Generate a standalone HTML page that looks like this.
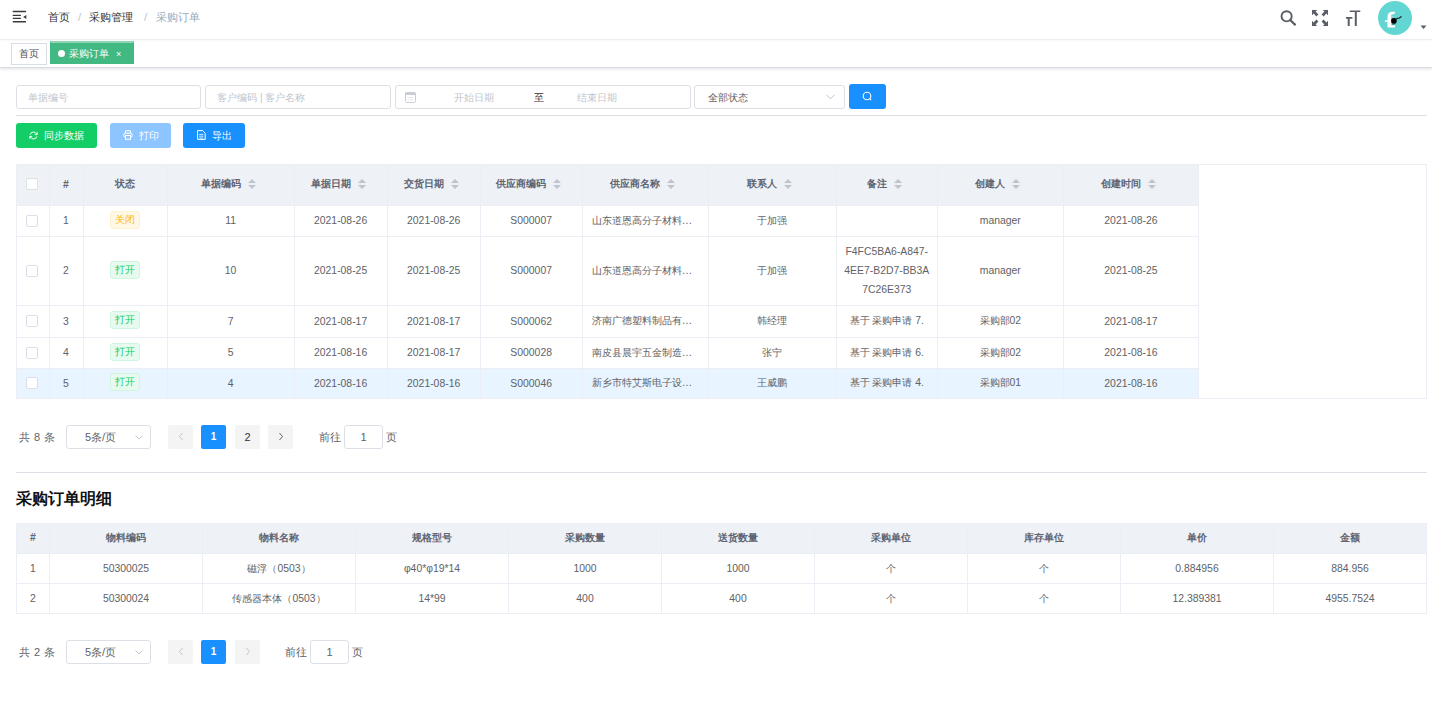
<!DOCTYPE html>
<html><head><meta charset="utf-8">
<style>
*{box-sizing:border-box;margin:0;padding:0}
html,body{width:1432px;height:705px;overflow:hidden;background:#fff;font-family:"Liberation Sans",sans-serif;color:#606266}
.abs{position:absolute}
.hdr{position:absolute;left:0;top:0;width:1432px;height:40px;border-bottom:1px solid #f0f2f5;box-shadow:0 1px 2px rgba(0,21,41,.03)}
.bc{position:absolute;top:10px;font-size:11.2px;line-height:14px;white-space:nowrap}
.tags{position:absolute;left:0;top:40px;width:1432px;height:28px;border-bottom:1px solid #d8dce5;box-shadow:0 1px 3px 0 rgba(0,0,0,.12)}
.tag{position:absolute;top:43px;height:22px;border:1px solid #d8dce5;font-size:10px;line-height:20px;color:#495060;padding:0 7px;background:#fff}
.inp{position:absolute;top:85px;height:24px;border:1px solid #dcdfe6;border-radius:3px;font-size:10.4px;line-height:23px;color:#c0c4cc;padding-left:11px;background:#fff;white-space:nowrap}
.btn{position:absolute;top:123px;height:25px;border-radius:3px;font-size:10px;line-height:26px;color:#fff;text-align:center;white-space:nowrap}
table{border-collapse:collapse;table-layout:fixed}
.t td,.t th{border-right:1px solid #ebeef5;border-bottom:1px solid #ebeef5;text-align:center;font-size:10.4px;color:#606266;padding:0;overflow:hidden;white-space:nowrap}
.t th{background:#eef1f6;color:#5f6573;font-weight:bold}
.tagc{display:inline-block;height:18px;line-height:16px;padding:0 4px;border-radius:3px;font-size:10px;border:1px solid;vertical-align:middle;position:relative;top:-1px}
.tg{background:#e7faf0;border-color:#d0f5e0;color:#13ce66}
.to{background:#fff8e6;border-color:#fff1cc;color:#ffba00}
.cb{display:inline-block;width:12px;height:12px;border:1px solid #dcdfe6;border-radius:2px;background:#fff;vertical-align:middle}
.sort{display:inline-block;vertical-align:middle;width:20px;height:11px;position:relative}
.sort:before{content:"";position:absolute;left:7px;top:0;border:4px solid transparent;border-bottom:4px solid #c0c4cc;border-top-width:0}
.sort:after{content:"";position:absolute;left:7px;top:6px;border:4px solid transparent;border-top:4px solid #c0c4cc;border-bottom-width:0}
.el{overflow:hidden;text-overflow:ellipsis;white-space:nowrap;padding:0 9px;text-align:left}
.pg{position:absolute;font-size:11px;white-space:nowrap;word-spacing:1px}
.dt th{padding-bottom:2px}
.pbtn{position:absolute;height:24px;width:25px;background:#f4f4f5;border-radius:2px;text-align:center;line-height:24px;font-size:10px;color:#606266;font-weight:bold}
.psel{position:absolute;height:24px;border:1px solid #dcdfe6;border-radius:3px;font-size:11px;line-height:22px;color:#606266;background:#fff}
</style></head><body>
<!-- header -->
<div class="hdr"></div>
<svg class="abs" style="left:8px;top:6px" width="24" height="22" viewBox="0 0 24 22"><g fill="#3a3a3a"><rect x="4.6" y="4.8" width="13.6" height="1.4" rx="0.7"/><rect x="4.6" y="8.8" width="8.4" height="1.3" rx="0.6"/><rect x="4.6" y="11.8" width="8.4" height="1.3" rx="0.6"/><rect x="4.6" y="15.1" width="13.6" height="1.4" rx="0.7"/><path d="M18.3 9.1V13.1L15.2 11.1Z"/></g></svg>
<div class="bc" style="left:48px;color:#303133">首页</div>
<div class="bc" style="left:78px;color:#c0c4cc">/</div>
<div class="bc" style="left:89px;color:#303133">采购管理</div>
<div class="bc" style="left:144px;color:#c0c4cc">/</div>
<div class="bc" style="left:156px;color:#97a8be">采购订单</div>

<!-- right icons -->
<svg class="abs" style="left:1279px;top:8px" width="20" height="20" viewBox="0 0 20 20"><circle cx="7.6" cy="8.3" r="5.1" fill="none" stroke="#5a5e66" stroke-width="1.9"/><path d="M11.4 12.3 L16 16.6" stroke="#5a5e66" stroke-width="2.2" stroke-linecap="round"/></svg>
<svg class="abs" style="left:1311px;top:9px" width="18" height="18" viewBox="0 0 18 18" fill="#5a5e66"><path d="M1 1h5.2L4.6 2.6 7.4 5.4 5.4 7.4 2.6 4.6 1 6.2z"/><path d="M17 1v5.2l-1.6-1.6-2.8 2.8-2-2 2.8-2.8L11.8 1z"/><path d="M1 17v-5.2l1.6 1.6 2.8-2.8 2 2-2.8 2.8L6.2 17z"/><path d="M17 17h-5.2l1.6-1.6-2.8-2.8 2-2 2.8 2.8 1.6-1.6z"/></svg>
<svg class="abs" style="left:1345px;top:9px" width="18" height="18" viewBox="0 0 18 18" fill="#5a5e66"><path d="M4.7 1.4h10.6v1.7h-3.5V17H9.8V3.1H4.7z"/><path d="M1 8h6.4v1.7H4.7V17H2.7V9.7H1z"/></svg>
<svg class="abs" style="left:1378px;top:1px" width="34" height="34" viewBox="0 0 34 34"><circle cx="17" cy="17" r="17" fill="#62d6d3"/><path d="M9.5 26.5V15.5C9.5 12.5 11.5 10.8 14.7 10.8H17.3L16.2 13.2H14.6C13.6 13.2 13.2 14 13.2 15V24.3H17V26.5Z" fill="#fff"/><rect x="6.8" y="19.4" width="4.6" height="1.6" fill="#fff"/><path d="M13 15.8h3.5" stroke="#c9c9c9" stroke-width="0.9"/><circle cx="15.9" cy="19.9" r="2.8" fill="#000"/><path d="M17.4 18.6L19.5 17.3 21.5 17 23.5 15.3" stroke="#111" stroke-width="1.1" fill="none"/><path d="M14.3 23.4h2.2" stroke="#555" stroke-width="0.8"/></svg>
<svg class="abs" style="left:1420px;top:25px" width="8" height="5" viewBox="0 0 8 5"><path d="M0.5 0.5h6l-3 3.5z" fill="#5a5e66"/></svg>
<!-- tags -->
<div class="tags"></div>
<div class="tag" style="left:11px;width:36px;color:#495060">首页</div>
<div class="tag" style="left:50px;width:84px;background:#42b983;border-color:#42b983;color:#fff;top:41px;height:23px;line-height:21px;padding-left:7px;border-top:2px solid #8fd4b4"><span style="display:inline-block;width:7px;height:7px;border-radius:50%;background:#fff;margin-right:4px;vertical-align:0px"></span>采购订单<span style="margin-left:7px;font-size:9px">×</span></div>
<!-- search -->
<div class="inp" style="left:16px;width:185px">单据编号</div>
<div class="inp" style="left:205px;width:186px">客户编码 | 客户名称</div>
<div class="inp" style="left:395px;width:296px;padding-left:0">
 <svg class="abs" style="left:9px;top:6px" width="11" height="11" viewBox="0 0 11 11"><rect x="0.5" y="0.5" width="10" height="10" rx="1.2" fill="none" stroke="#c8ccd4"/><rect x="0.5" y="0.5" width="10" height="2.5" fill="#c8ccd4"/><path d="M2.5 5.5h6M2.5 7.8h6" stroke="#dcdfe6" stroke-width="0.8"/></svg>
 <span class="abs" style="left:58px">开始日期</span><span class="abs" style="left:138px;color:#303133">至</span><span class="abs" style="left:181px">结束日期</span>
</div>
<div class="inp" style="left:694px;width:151px;color:#606266;padding-left:13px">全部状态<svg class="abs" style="left:131px;top:8px" width="9" height="6" viewBox="0 0 9 6"><path d="M0.5 0.8 L4.5 4.8 L8.5 0.8" fill="none" stroke="#c0c4cc" stroke-width="1"/></svg></div>
<div class="abs" style="left:849px;top:84px;width:37px;height:25px;border-radius:3px;background:#1890ff"></div>
<svg class="abs" style="left:862px;top:91px" width="11" height="11" viewBox="0 0 11 11"><circle cx="5" cy="5" r="3.8" fill="none" stroke="#fff" stroke-width="1.1"/><path d="M7.6 7.6L9.2 9.2" stroke="#fff" stroke-width="1.2"/></svg>
<div class="abs" style="left:16px;top:115px;width:1411px;height:1px;background:#dcdfe6"></div>
<!-- buttons -->
<div class="btn" style="left:16px;width:81px;background:#13ce66"><svg style="vertical-align:-1px;margin-right:6px" width="9" height="9" viewBox="0 0 9 9"><path d="M1.2 3.6A3.4 3.4 0 0 1 7.6 3" fill="none" stroke="#fff" stroke-width="1"/><path d="M7.8 5.4A3.4 3.4 0 0 1 1.4 6" fill="none" stroke="#fff" stroke-width="1"/><path d="M8.2 1.2V3.6H5.8" fill="none" stroke="#fff" stroke-width="1"/><path d="M0.8 7.8V5.4H3.2" fill="none" stroke="#fff" stroke-width="1"/></svg>同步数据</div>
<div class="btn" style="left:110px;width:61px;background:#8cc5ff"><svg style="vertical-align:-1px;margin-right:6px" width="10" height="10" viewBox="0 0 10 10"><path d="M2.5 3.2V0.8H7.5V3.2" fill="none" stroke="#fff" stroke-width="1"/><rect x="0.7" y="3.2" width="8.6" height="4" rx="1.8" fill="none" stroke="#fff" stroke-width="1"/><rect x="2.5" y="5.5" width="5" height="3.8" fill="#8cc5ff" stroke="#fff" stroke-width="1"/></svg>打印</div>
<div class="btn" style="left:183px;width:62px;background:#1890ff"><svg style="vertical-align:-1px;margin-right:6px" width="9" height="10" viewBox="0 0 9 10"><path d="M0.6 0.6H5.6L8.2 3.2V9.4H0.6Z" fill="none" stroke="#fff" stroke-width="1"/><path d="M2.2 4.4H6.4M2.2 6.2H6.4M2.2 8H6.4" stroke="#fff" stroke-width="0.8"/></svg>导出</div>
<table class="t abs" style="left:16px;top:164px;width:1183px"><colgroup><col style="width:33px"><col style="width:34px"><col style="width:84px"><col style="width:127px"><col style="width:93px"><col style="width:93px"><col style="width:102px"><col style="width:126px"><col style="width:128px"><col style="width:101px"><col style="width:126px"><col style="width:135px"></colgroup><tr style="height:41px"><th><span class="cb"></span></th><th>#</th><th>状态</th><th>单据编码<i class="sort"></i></th><th>单据日期<i class="sort"></i></th><th>交货日期<i class="sort"></i></th><th>供应商编码<i class="sort"></i></th><th>供应商名称<i class="sort"></i></th><th>联系人<i class="sort"></i></th><th>备注<i class="sort"></i></th><th>创建人<i class="sort"></i></th><th>创建时间<i class="sort"></i></th></tr><tr style="height:31px"><td><span class="cb"></span></td><td>1</td><td><span class="tagc to">关闭</span></td><td>11</td><td>2021-08-26</td><td>2021-08-26</td><td>S000007</td><td><div class="el">山东道恩高分子材料股份有限公司</div></td><td>于加强</td><td></td><td>manager</td><td>2021-08-26</td></tr><tr style="height:69px"><td><span class="cb"></span></td><td>2</td><td><span class="tagc tg">打开</span></td><td>10</td><td>2021-08-25</td><td>2021-08-25</td><td>S000007</td><td><div class="el">山东道恩高分子材料股份有限公司</div></td><td>于加强</td><td><div style="white-space:normal;line-height:19px;padding:0 6px">F4FC5BA6-A847-<br>4EE7-B2D7-BB3A<br>7C26E373</div></td><td>manager</td><td>2021-08-25</td></tr><tr style="height:32px"><td><span class="cb"></span></td><td>3</td><td><span class="tagc tg">打开</span></td><td>7</td><td>2021-08-17</td><td>2021-08-17</td><td>S000062</td><td><div class="el">济南广德塑料制品有限公司</div></td><td>韩经理</td><td>基于 采购申请 7.</td><td>采购部02</td><td>2021-08-17</td></tr><tr style="height:31px"><td><span class="cb"></span></td><td>4</td><td><span class="tagc tg">打开</span></td><td>5</td><td>2021-08-16</td><td>2021-08-17</td><td>S000028</td><td><div class="el">南皮县晨宇五金制造有限公司</div></td><td>张宁</td><td>基于 采购申请 6.</td><td>采购部02</td><td>2021-08-16</td></tr><tr style="height:30px;background:#e8f4ff"><td><span class="cb"></span></td><td>5</td><td><span class="tagc tg">打开</span></td><td>4</td><td>2021-08-16</td><td>2021-08-16</td><td>S000046</td><td><div class="el">新乡市特艾斯电子设备有限公司</div></td><td>王威鹏</td><td>基于 采购申请 4.</td><td>采购部01</td><td>2021-08-16</td></tr></table>
<div class="abs" style="left:16px;top:164px;width:1411px;height:235px;border:1px solid #ebeef5"></div>
<div class="pg" style="left:19px;top:425px;line-height:24px">共 8 条</div><div class="psel" style="left:66px;top:425px;width:85px;padding-left:18px">5条/页<svg class="abs" style="left:68px;top:9px" width="8" height="5" viewBox="0 0 8 5"><path d="M0.5 0.5 L4 4 L7.5 0.5" fill="none" stroke="#c0c4cc" stroke-width="1"/></svg></div><div class="pbtn" style="left:168px;top:425px;color:#c0c4cc"><svg width="6" height="9" viewBox="0 0 6 9" style="vertical-align:-1px"><path d="M4.5 1L1.5 4.5L4.5 8" fill="none" stroke="#c0c4cc" stroke-width="1"/></svg></div><div class="pbtn" style="left:201px;top:425px;background:#1890ff;color:#fff">1</div><div class="pbtn" style="left:235px;top:425px;font-weight:normal;color:#303133;font-size:11px">2</div><div class="pbtn" style="left:268px;top:425px"><svg width="6" height="9" viewBox="0 0 6 9" style="vertical-align:-1px"><path d="M1.5 1L4.5 4.5L1.5 8" fill="none" stroke="#606266" stroke-width="1"/></svg></div><div class="pg" style="left:319px;top:425px;line-height:24px">前往</div><div class="psel" style="left:344px;top:425px;width:39px;text-align:center">1</div><div class="pg" style="left:386px;top:425px;line-height:24px">页</div>
<div class="abs" style="left:16px;top:472px;width:1411px;height:1px;background:#dcdfe6"></div>
<div class="abs" style="left:16px;top:489px;font-size:15.5px;font-weight:bold;color:#111;line-height:20px">采购订单明细</div>
<table class="t dt abs" style="left:16px;top:523px;width:1410px;border-left:1px solid #ebeef5;border-top:1px solid #ebeef5"><colgroup><col style="width:33px"><col style="width:153px"><col style="width:153px"><col style="width:153px"><col style="width:153px"><col style="width:153px"><col style="width:153px"><col style="width:153px"><col style="width:153px"><col style="width:153px"></colgroup><tr style="height:30px"><th>#</th><th>物料编码</th><th>物料名称</th><th>规格型号</th><th>采购数量</th><th>送货数量</th><th>采购单位</th><th>库存单位</th><th>单价</th><th>金额</th></tr><tr style="height:30px"><td>1</td><td>50300025</td><td>磁浮（0503）</td><td>φ40*φ19*14</td><td>1000</td><td>1000</td><td>个</td><td>个</td><td>0.884956</td><td>884.956</td></tr><tr style="height:30px"><td>2</td><td>50300024</td><td>传感器本体（0503）</td><td>14*99</td><td>400</td><td>400</td><td>个</td><td>个</td><td>12.389381</td><td>4955.7524</td></tr></table>
<div class="pg" style="left:19px;top:640px;line-height:24px">共 2 条</div><div class="psel" style="left:66px;top:640px;width:85px;padding-left:18px">5条/页<svg class="abs" style="left:68px;top:9px" width="8" height="5" viewBox="0 0 8 5"><path d="M0.5 0.5 L4 4 L7.5 0.5" fill="none" stroke="#c0c4cc" stroke-width="1"/></svg></div><div class="pbtn" style="left:168px;top:640px;color:#c0c4cc"><svg width="6" height="9" viewBox="0 0 6 9" style="vertical-align:-1px"><path d="M4.5 1L1.5 4.5L4.5 8" fill="none" stroke="#c0c4cc" stroke-width="1"/></svg></div><div class="pbtn" style="left:201px;top:640px;background:#1890ff;color:#fff">1</div><div class="pbtn" style="left:235px;top:640px"><svg width="6" height="9" viewBox="0 0 6 9" style="vertical-align:-1px"><path d="M1.5 1L4.5 4.5L1.5 8" fill="none" stroke="#c0c4cc" stroke-width="1"/></svg></div><div class="pg" style="left:285px;top:640px;line-height:24px">前往</div><div class="psel" style="left:310px;top:640px;width:39px;text-align:center">1</div><div class="pg" style="left:352px;top:640px;line-height:24px">页</div>
</body></html>
